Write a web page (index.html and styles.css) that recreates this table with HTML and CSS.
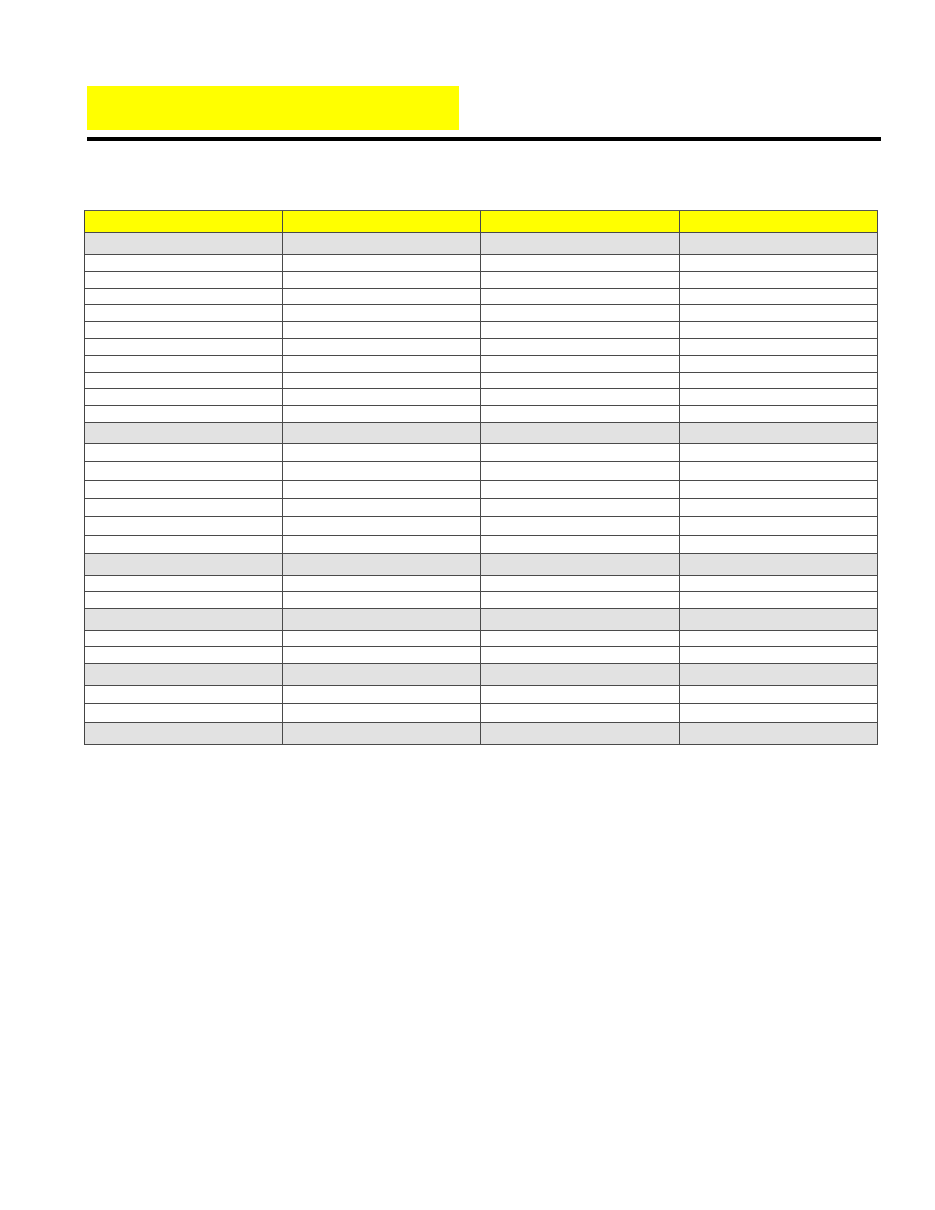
FILE: index.html
```html
<!DOCTYPE html>
<html lang="en">
<head>
<meta charset="utf-8">
<title>Sheet</title>
<link rel="stylesheet" href="styles.css">
</head>
<body>
<div class="page">
  <div class="title-box"></div>
  <div class="rule"></div>
  <div class="grid">
    <div class="row r-head"><div class="c"></div><div class="c"></div><div class="c c3"></div><div class="c"></div></div>
    <div class="row band"><div class="c"></div><div class="c"></div><div class="c c3"></div><div class="c"></div></div>
    <div class="row ra"><div class="c"></div><div class="c"></div><div class="c c3"></div><div class="c"></div></div>
    <div class="row ra"><div class="c"></div><div class="c"></div><div class="c c3"></div><div class="c"></div></div>
    <div class="row ra"><div class="c"></div><div class="c"></div><div class="c c3"></div><div class="c"></div></div>
    <div class="row ra"><div class="c"></div><div class="c"></div><div class="c c3"></div><div class="c"></div></div>
    <div class="row ra"><div class="c"></div><div class="c"></div><div class="c c3"></div><div class="c"></div></div>
    <div class="row ra"><div class="c"></div><div class="c"></div><div class="c c3"></div><div class="c"></div></div>
    <div class="row ra"><div class="c"></div><div class="c"></div><div class="c c3"></div><div class="c"></div></div>
    <div class="row ra"><div class="c"></div><div class="c"></div><div class="c c3"></div><div class="c"></div></div>
    <div class="row ra"><div class="c"></div><div class="c"></div><div class="c c3"></div><div class="c"></div></div>
    <div class="row ra"><div class="c"></div><div class="c"></div><div class="c c3"></div><div class="c"></div></div>
    <div class="row band band-s"><div class="c"></div><div class="c"></div><div class="c c3"></div><div class="c"></div></div>
    <div class="row rb"><div class="c"></div><div class="c"></div><div class="c c3"></div><div class="c"></div></div>
    <div class="row rb"><div class="c"></div><div class="c"></div><div class="c c3"></div><div class="c"></div></div>
    <div class="row rb"><div class="c"></div><div class="c"></div><div class="c c3"></div><div class="c"></div></div>
    <div class="row rb"><div class="c"></div><div class="c"></div><div class="c c3"></div><div class="c"></div></div>
    <div class="row rb"><div class="c"></div><div class="c"></div><div class="c c3"></div><div class="c"></div></div>
    <div class="row rb"><div class="c"></div><div class="c"></div><div class="c c3"></div><div class="c"></div></div>
    <div class="row band"><div class="c"></div><div class="c"></div><div class="c c3"></div><div class="c"></div></div>
    <div class="row rc"><div class="c"></div><div class="c"></div><div class="c c3"></div><div class="c"></div></div>
    <div class="row rc"><div class="c"></div><div class="c"></div><div class="c c3"></div><div class="c"></div></div>
    <div class="row band"><div class="c"></div><div class="c"></div><div class="c c3"></div><div class="c"></div></div>
    <div class="row rc"><div class="c"></div><div class="c"></div><div class="c c3"></div><div class="c"></div></div>
    <div class="row rc"><div class="c"></div><div class="c"></div><div class="c c3"></div><div class="c"></div></div>
    <div class="row band"><div class="c"></div><div class="c"></div><div class="c c3"></div><div class="c"></div></div>
    <div class="row rd"><div class="c"></div><div class="c"></div><div class="c c3"></div><div class="c"></div></div>
    <div class="row rd"><div class="c"></div><div class="c"></div><div class="c c3"></div><div class="c"></div></div>
    <div class="row band"><div class="c"></div><div class="c"></div><div class="c c3"></div><div class="c"></div></div>
  </div>
</div>
</body>
</html>
```
FILE: styles.css
```css
html, body {
  margin: 0;
  padding: 0;
  background: #ffffff;
  font-family: "Liberation Sans", Arial, sans-serif;
}

.page {
  padding-top: 86px;
}

.title-box {
  margin-left: 87px;
  width: 372px;
  height: 44px;
  background: #ffff00;
}

.rule {
  margin-top: 7px;
  margin-left: 87px;
  width: 794px;
  height: 4px;
  background: #000000;
}

.grid {
  margin-top: 69px;
  margin-left: 84px;
  width: 794px;
  box-sizing: border-box;
  border-top: 1px solid #555555;
  border-left: 1px solid #444444;
  display: flex;
  flex-direction: column;
}

.row {
  display: flex;
  box-sizing: border-box;
  border-bottom: 1px solid #4a4a4a;
  background: #ffffff;
}

.c {
  width: 198px;
  box-sizing: border-box;
  border-right: 1px solid #4a4a4a;
}

.c3 {
  width: 199px;
}

.r-head {
  height: 22px;
  background: #ffff00;
}

.band {
  height: 22px;
  background: #e2e2e2;
}

.band-s {
  height: 21px;
}

.ra {
  height: 16.8px;
}

.rb {
  height: 18.33px;
}

.rc {
  height: 16.5px;
}

.rd {
  height: 18.5px;
}
```
